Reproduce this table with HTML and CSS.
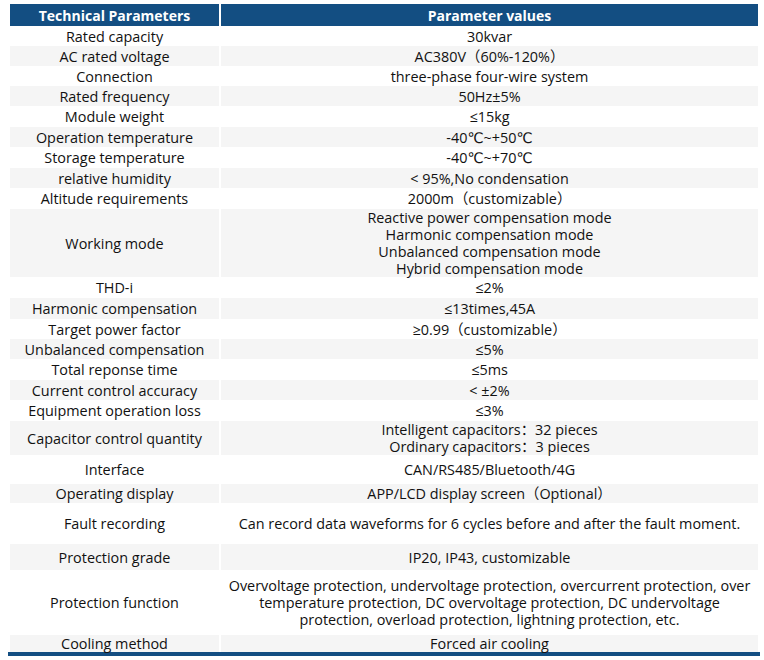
FILE: index.html
```html
<!DOCTYPE html>
<html>
<head>
<meta charset="utf-8">
<link rel="stylesheet" href="styles.css">
</head>
<body>
<table class="spec">
  <thead>
    <tr class="head"><th class="c1">Technical Parameters</th><th class="c2">Parameter values</th></tr>
  </thead>
  <tbody>
    <tr class="r20"><td>Rated capacity</td><td>30kvar</td></tr>
    <tr class="r20 alt"><td>AC rated voltage</td><td>AC380V（60%-120%）</td></tr>
    <tr class="r20"><td>Connection</td><td>three-phase four-wire system</td></tr>
    <tr class="r20 alt"><td>Rated frequency</td><td>50Hz±5%</td></tr>
    <tr class="r21"><td>Module weight</td><td>≤15kg</td></tr>
    <tr class="r20 alt"><td>Operation temperature</td><td>-40℃~+50℃</td></tr>
    <tr class="r21"><td>Storage temperature</td><td>-40℃~+70℃</td></tr>
    <tr class="r20 alt"><td>relative humidity</td><td>&lt; 95%,No condensation</td></tr>
    <tr class="r21"><td>Altitude requirements</td><td>2000m（customizable）</td></tr>
    <tr class="r67 alt"><td>Working mode</td><td>Reactive power compensation mode<br>Harmonic compensation mode<br>Unbalanced compensation mode<br>Hybrid compensation mode</td></tr>
    <tr class="r21"><td>THD-i</td><td>≤2%</td></tr>
    <tr class="r21 alt"><td>Harmonic compensation</td><td>≤13times,45A</td></tr>
    <tr class="r20"><td>Target power factor</td><td>≥0.99（customizable）</td></tr>
    <tr class="r20 alt"><td>Unbalanced compensation</td><td>≤5%</td></tr>
    <tr class="r21"><td>Total reponse time</td><td>≤5ms</td></tr>
    <tr class="r20 alt"><td>Current control accuracy</td><td>&lt; ±2%</td></tr>
    <tr class="r21"><td>Equipment operation loss</td><td>≤3%</td></tr>
    <tr class="r32 alt"><td>Capacitor control quantity</td><td>Intelligent capacitors：32 pieces<br>Ordinary capacitors：3 pieces</td></tr>
    <tr class="r29"><td>Interface</td><td>CAN/RS485/Bluetooth/4G</td></tr>
    <tr class="r19 alt"><td>Operating display</td><td>APP/LCD display screen（Optional）</td></tr>
    <tr class="r41"><td>Fault recording</td><td>Can record data waveforms for 6 cycles before and after the fault moment.</td></tr>
    <tr class="r26 alt"><td>Protection grade</td><td>IP20, IP43, customizable</td></tr>
    <tr class="r65"><td>Protection function</td><td>Overvoltage protection, undervoltage protection, overcurrent protection, over<br>temperature protection, DC overvoltage protection, DC undervoltage<br>protection, overload protection, lightning protection, etc.</td></tr>
    <tr class="r17 alt last"><td>Cooling method</td><td>Forced air cooling</td></tr>
  </tbody>
</table>
</body>
</html>
```
FILE: styles.css
```css
html, body {
  margin: 0;
  padding: 0;
  background: #ffffff;
}
body {
  padding: 4px 0 0 10px;
  font-family: "Open Sans", "DejaVu Sans", "Noto Sans CJK SC", sans-serif;
  font-size: 14.4px;
  color: #111111;
}
.spec {
  border-collapse: separate;
  border-spacing: 2px 0;
  margin-left: -2px;
  width: 752px;
  table-layout: fixed;
  border-bottom: 4px solid #134e82;
}
.spec th, .spec td {
  padding: 0;
  text-align: center;
  vertical-align: middle;
  line-height: 17px;
  white-space: nowrap;
}
.c1 { width: 209px; }
.c2 { width: 537px; }
.head th {
  background: #134e82;
  color: #ffffff;
  font-weight: bold;
  font-size: 14px;
  height: 22px;
}
.alt td { background: #f5f5f5; }
.r17 td { height: 17px; }
.r19 td { height: 19px; }
.r20 td { height: 20px; }
.r21 td { height: 21px; }
.r26 td { height: 26px; }
.r29 td { height: 29px; }
.r32 td { height: 32px; }
.r41 td { height: 41px; }
.r65 td { height: 65px; }
.r67 td { height: 67px; }
```
